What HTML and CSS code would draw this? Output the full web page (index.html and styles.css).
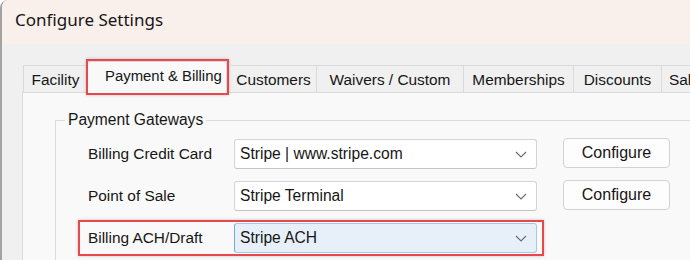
FILE: index.html
```html
<!DOCTYPE html>
<html lang="en">
<head>
    <meta charset="UTF-8">
    <title>Configure Settings</title>
    <link rel="stylesheet" href="styles.css">
</head>
<body>
    <div class="window">
        <div class="titlebar">Configure Settings</div>
        <div class="client">
            <div class="tabs">
                <div class="tab tab-facility">Facility</div>
                <div class="tab active">Payment &amp; Billing</div>
                <div class="tab tab-customers">Customers</div>
                <div class="tab tab-waivers">Waivers / Custom</div>
                <div class="tab tab-memberships">Memberships</div>
                <div class="tab tab-discounts">Discounts</div>
                <div class="tab tab-sales">Sales</div>
            </div>
            <div class="panel">
                <fieldset class="group">
                    <legend>Payment Gateways</legend>

                    <div class="row">
                        <div class="field">
                            <label>Billing Credit Card</label>
                            <div class="combo">
                                <span>Stripe | www.stripe.com</span>
                                <svg class="chevron" width="12" height="7" viewBox="0 0 12 7"><polyline points="1,1 6,6 11,1" /></svg>
                            </div>
                        </div>
                        <button>Configure</button>
                    </div>

                    <div class="row">
                        <div class="field">
                            <label>Point of Sale</label>
                            <div class="combo">
                                <span>Stripe Terminal</span>
                                <svg class="chevron" width="12" height="7" viewBox="0 0 12 7"><polyline points="1,1 6,6 11,1" /></svg>
                            </div>
                        </div>
                        <button>Configure</button>
                    </div>

                    <div class="row">
                        <div class="field marked">
                            <label>Billing ACH/Draft</label>
                            <div class="combo focused">
                                <span>Stripe ACH</span>
                                <svg class="chevron" width="12" height="7" viewBox="0 0 12 7"><polyline points="1,1 6,6 11,1" /></svg>
                            </div>
                        </div>
                    </div>
                </fieldset>
            </div>
        </div>
    </div>
</body>
</html>
```

FILE: styles.css
```css
html, body {
    margin: 0;
    height: 100%;
    overflow: hidden;
}
body {
    font-family: "Liberation Sans", Arial, sans-serif;
    font-size: 15.4px;
    color: #161616;
    background: #fff;
}
.window {
    height: 260px;
    border-left: 2px solid #a3a3a3;
    border-top-left-radius: 8px;
    background: #f0f0f0;
    overflow: hidden;
}
.titlebar {
    height: 44px;
    background: #f9f0eb;
    padding-left: 13px;
    font-family: "Noto Sans", sans-serif;
    font-size: 17px;
    line-height: 40px;
}
.client {
    padding: 21px 0 0 20px;
}
.tabs {
    display: flex;
    align-items: flex-end;
    height: 27px;
    margin-left: 1px;
    position: relative;
    z-index: 1;
    white-space: nowrap;
}
.tab {
    flex: none;
    box-sizing: border-box;
    height: 27px;
    line-height: 28px;
    text-align: center;
    border: 1px solid #dadada;
    border-bottom: none;
    border-left: none;
    background: #f0f0f0;
    font-size: 15.4px;
}
.tab-facility {
    width: 65px;
    border-left: 1px solid #dadada;
}
.tab-customers { width: 86px; }
.tab-waivers { width: 147px; }
.tab-memberships { width: 110px; }
.tab-discounts { width: 88px; }
.tab-sales {
    width: 50px;
    text-align: left;
    padding-left: 7px;
}
.tab.active {
    width: 139px;
    height: 32px;
    margin-bottom: -1px;
    margin-right: 4px;
    padding: 0 0 4px 17px;
    text-align: left;
    background: #f9f9f9;
    font-size: 14.9px;
    outline: 2px solid #e8474b;
    box-shadow: 0 0 3px 2px rgba(0, 0, 0, 0.22);
}
.panel {
    box-sizing: border-box;
    height: 400px;
    padding: 19px 0 0 32px;
    background: #f9f9f9;
    border: 1px solid #dadada;
    border-right: none;
}
.group {
    margin: 0;
    min-width: 0;
    height: 300px;
    padding: 11px 0 0 0;
    border: 1px solid #dcdcdc;
    border-right: none;
}
.group legend {
    margin-left: 9px;
    padding: 0 3px;
    line-height: 16px;
    font-size: 15.6px;
}
.row {
    display: flex;
    align-items: center;
    margin-bottom: 12px;
    padding-left: 32px;
}
.field {
    display: flex;
    align-items: center;
}
.field label {
    width: 146px;
}
.field.marked {
    padding: 1px 5px 1px 8px;
    margin: -1px -5px -1px -8px;
    outline: 2px solid #e8474b;
    box-shadow: 0 0 3px 2px rgba(0, 0, 0, 0.22);
}
.combo {
    box-sizing: border-box;
    width: 303px;
    height: 30px;
    padding: 0 9px 0 5px;
    display: flex;
    align-items: center;
    justify-content: space-between;
    background: #fff;
    border: 1px solid #d4d4d4;
    border-bottom-color: #c4c4c4;
    border-radius: 3px;
    font-size: 15.6px;
}
.combo.focused {
    background: #e7f0f9;
    border-color: #a9c8e8;
    border-left-color: #7aa9d8;
}
.chevron polyline {
    fill: none;
    stroke: #6b6b6b;
    stroke-width: 1.1;
}
button {
    box-sizing: border-box;
    width: 107px;
    height: 30px;
    margin: -2px 0 0 26px;
    font: inherit;
    font-size: 16px;
    color: inherit;
    background: #fdfdfd;
    border: 1px solid #d2d2d2;
    border-radius: 4px;
}
```
